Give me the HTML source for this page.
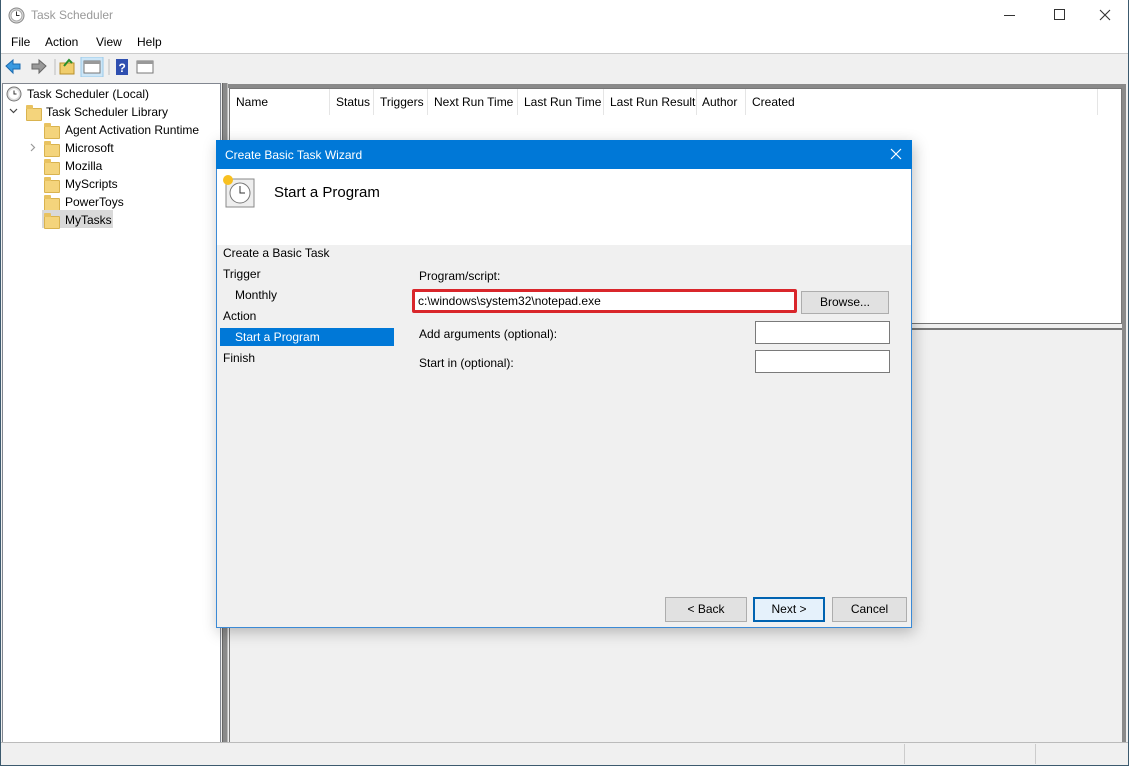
<!DOCTYPE html>
<html><head><meta charset="utf-8"><style>
*{box-sizing:border-box;margin:0;padding:0}
body{width:1129px;height:766px;background:#f0f0f0;font-family:"Liberation Sans",sans-serif;font-size:12px;color:#000;position:relative;overflow:hidden}
.a{position:absolute}
.t{position:absolute;white-space:nowrap}
.folder{position:absolute;width:16px;height:13px;background:#f4d47c;border:1px solid #d9b34f;border-radius:1px}
.folder:before{content:"";position:absolute;left:-1px;top:-4px;width:7px;height:4px;background:#e8c260;border-radius:1px 1px 0 0}
.btn{position:absolute;background:#e1e1e1;border:1px solid #adadad;text-align:center;line-height:21px;font-size:12px}
.inp{position:absolute;background:#fff;border:1px solid #7a7a7a}
</style></head><body>
<div class="a" style="left:0;top:0;width:1129px;height:766px;border:1px solid #3c5a6e;border-top:none"></div>
<div class="a" style="left:1px;top:0;width:1127px;height:31px;background:#fff"></div>
<svg class="a" style="left:8px;top:7px" width="17" height="17"><circle cx="8.5" cy="8.5" r="7.5" fill="#ddd" stroke="#888"/><circle cx="8.5" cy="8.5" r="5.5" fill="#fff" stroke="#aaa"/><path d="M8.5 4.5V8.5H11.5" stroke="#333" fill="none"/></svg>
<div class="t" style="left:31px;top:8px;font-size:12px;color:#999">Task Scheduler</div>
<div class="a" style="left:1004px;top:15px;width:11px;height:1px;background:#333"></div>
<div class="a" style="left:1054px;top:9px;width:11px;height:11px;border:1px solid #333"></div>
<svg class="a" style="left:1099px;top:9px" width="12" height="12"><path d="M1 1L11 11M11 1L1 11" stroke="#333" stroke-width="1.1"/></svg>
<div class="a" style="left:1px;top:31px;width:1127px;height:22px;background:#fff"></div>
<div class="t" style="left:11px;top:35px">File</div>
<div class="t" style="left:45px;top:35px">Action</div>
<div class="t" style="left:96px;top:35px">View</div>
<div class="t" style="left:137px;top:35px">Help</div>
<div class="a" style="left:1px;top:53px;width:1127px;height:1px;background:#ccc"></div>
<svg class="a" style="left:4px;top:57px" width="160" height="20">
<path d="M2 9l7-6v4h7v5H9v4z" fill="#3a9ae0" stroke="#1b6bb0"/>
<path d="M42 9l-7-6v4h-7v5h7v4z" fill="#999" stroke="#666"/>
<line x1="51" y1="2" x2="51" y2="18" stroke="#bbb"/>
<rect x="56" y="6" width="14" height="11" fill="#f0cd6c" stroke="#b7902c"/><path d="M60 9l5-6 3 3" stroke="#2a8f2a" stroke-width="2" fill="none"/>
<rect x="77" y="0" width="22" height="20" fill="#cde6f7" stroke="#99c9ea"/>
<rect x="80" y="4" width="16" height="12" fill="#fff" stroke="#777"/><rect x="80" y="4" width="16" height="3" fill="#999"/>
<line x1="105" y1="2" x2="105" y2="18" stroke="#bbb"/>
<rect x="112" y="2" width="12" height="16" fill="#2f4fb0"/><text x="114.5" y="15" fill="#fff" font-size="12" font-weight="bold" font-family="Liberation Sans">?</text>
<rect x="133" y="4" width="16" height="12" fill="#fff" stroke="#777"/><rect x="133" y="4" width="16" height="3" fill="#999"/>
</svg>
<div class="a" style="left:2px;top:83px;width:219px;height:660px;background:#fff;border:1px solid #828790"></div>
<svg class="a" style="left:6px;top:86px" width="16" height="16"><circle cx="8" cy="8" r="7" fill="#ddd" stroke="#777"/><circle cx="8" cy="8" r="5" fill="#fff"/><path d="M8 4.5V8H10.5" stroke="#333" fill="none"/></svg>
<div class="t" style="left:27px;top:87px">Task Scheduler (Local)</div>
<svg class="a" style="left:9px;top:108px" width="9" height="6"><path d="M1 1L4.5 4.5L8 1" stroke="#444" fill="none" stroke-width="1.2"/></svg>
<div class="folder" style="left:26px;top:108px"></div>
<div class="t" style="left:46px;top:105px">Task Scheduler Library</div>
<div class="folder" style="left:44px;top:126px"></div><div class="t" style="left:65px;top:123px">Agent Activation Runtime</div>
<svg class="a" style="left:30px;top:143px" width="6" height="9"><path d="M1 1L4.5 4.5L1 8" stroke="#999" fill="none" stroke-width="1.2"/></svg>
<div class="folder" style="left:44px;top:144px"></div><div class="t" style="left:65px;top:141px">Microsoft</div>
<div class="folder" style="left:44px;top:162px"></div><div class="t" style="left:65px;top:159px">Mozilla</div>
<div class="folder" style="left:44px;top:180px"></div><div class="t" style="left:65px;top:177px">MyScripts</div>
<div class="folder" style="left:44px;top:198px"></div><div class="t" style="left:65px;top:195px">PowerToys</div>
<div class="a" style="left:42px;top:210px;width:71px;height:18px;background:#d9d9d9"></div>
<div class="folder" style="left:44px;top:216px"></div><div class="t" style="left:65px;top:213px">MyTasks</div>
<div class="a" style="left:222px;top:83px;width:6px;height:660px;background:#8a8a8a;border-left:1px solid #666;border-right:1px solid #bbb"></div>
<div class="a" style="left:228px;top:84px;width:898px;height:4px;background:#8a8a8a"></div>
<div class="a" style="left:229px;top:88px;width:893px;height:236px;background:#fff;border:1px solid #777"></div>
<div class="t" style="left:236px;top:95px">Name</div>
<div class="a" style="left:329px;top:89px;width:1px;height:26px;background:#e5e5e5"></div>
<div class="t" style="left:336px;top:95px">Status</div>
<div class="a" style="left:373px;top:89px;width:1px;height:26px;background:#e5e5e5"></div>
<div class="t" style="left:380px;top:95px">Triggers</div>
<div class="a" style="left:427px;top:89px;width:1px;height:26px;background:#e5e5e5"></div>
<div class="t" style="left:434px;top:95px">Next Run Time</div>
<div class="a" style="left:517px;top:89px;width:1px;height:26px;background:#e5e5e5"></div>
<div class="t" style="left:524px;top:95px">Last Run Time</div>
<div class="a" style="left:603px;top:89px;width:1px;height:26px;background:#e5e5e5"></div>
<div class="t" style="left:610px;top:95px">Last Run Result</div>
<div class="a" style="left:696px;top:89px;width:1px;height:26px;background:#e5e5e5"></div>
<div class="t" style="left:702px;top:95px">Author</div>
<div class="a" style="left:745px;top:89px;width:1px;height:26px;background:#e5e5e5"></div>
<div class="t" style="left:752px;top:95px">Created</div>
<div class="a" style="left:1097px;top:89px;width:1px;height:26px;background:#e5e5e5"></div>
<div class="a" style="left:229px;top:328px;width:893px;height:2px;background:#777"></div>
<div class="a" style="left:229px;top:330px;width:893px;height:412px;background:#f0f0f0;border-left:1px solid #777"></div>
<div class="a" style="left:1122px;top:84px;width:4px;height:659px;background:#8a8a8a"></div>
<div class="a" style="left:1px;top:742px;width:1127px;height:1px;background:#bbb"></div>
<div class="a" style="left:1px;top:743px;width:1127px;height:22px;background:#f0f0f0"></div>
<div class="a" style="left:904px;top:744px;width:1px;height:20px;background:#ccc"></div>
<div class="a" style="left:1035px;top:744px;width:1px;height:20px;background:#ccc"></div>
<div class="a" style="left:216px;top:140px;width:696px;height:488px;background:#f0f0f0;border:1px solid #3b8ad6;box-shadow:2px 4px 14px rgba(0,0,0,.25)"></div>
<div class="a" style="left:216px;top:140px;width:696px;height:29px;background:#0078d7"></div>
<div class="t" style="left:225px;top:148px;color:#fff">Create Basic Task Wizard</div>
<svg class="a" style="left:890px;top:148px" width="12" height="12"><path d="M1 1L11 11M11 1L1 11" stroke="#fff" stroke-width="1.2"/></svg>
<div class="a" style="left:217px;top:169px;width:694px;height:76px;background:#fff"></div>
<svg class="a" style="left:222px;top:174px" width="34" height="36"><rect x="4" y="5" width="28" height="28" fill="#eee" stroke="#888"/><circle cx="18" cy="19" r="10" fill="#fff" stroke="#777"/><path d="M18 12V19H23" stroke="#333" fill="none"/><circle cx="6" cy="6" r="5" fill="#f8c020"/></svg>
<div class="t" style="left:274px;top:184px;font-size:15px">Start a Program</div>
<div class="t" style="left:223px;top:246px">Create a Basic Task</div>
<div class="t" style="left:223px;top:267px">Trigger</div>
<div class="t" style="left:235px;top:288px">Monthly</div>
<div class="t" style="left:223px;top:309px">Action</div>
<div class="a" style="left:220px;top:328px;width:174px;height:18px;background:#0078d7"></div>
<div class="t" style="left:235px;top:330px;color:#fff">Start a Program</div>
<div class="t" style="left:223px;top:351px">Finish</div>
<div class="t" style="left:419px;top:269px">Program/script:</div>
<div class="a" style="left:412px;top:289px;width:385px;height:24px;border:3px solid #d9262b;border-radius:2px;background:#fff"></div>
<div class="t" style="left:418px;top:294px">c:\windows\system32\notepad.exe</div>
<div class="btn" style="left:801px;top:291px;width:88px;height:23px">Browse...</div>
<div class="t" style="left:419px;top:327px">Add arguments (optional):</div>
<div class="inp" style="left:755px;top:321px;width:135px;height:23px"></div>
<div class="t" style="left:419px;top:356px">Start in (optional):</div>
<div class="inp" style="left:755px;top:350px;width:135px;height:23px"></div>
<div class="btn" style="left:665px;top:597px;width:82px;height:25px;line-height:23px">&lt; Back</div>
<div class="btn" style="left:753px;top:597px;width:72px;height:25px;line-height:21px;border:2px solid #0063b1;background:#e5f1fb">Next &gt;</div>
<div class="btn" style="left:832px;top:597px;width:75px;height:25px;line-height:23px">Cancel</div>
</body></html>
